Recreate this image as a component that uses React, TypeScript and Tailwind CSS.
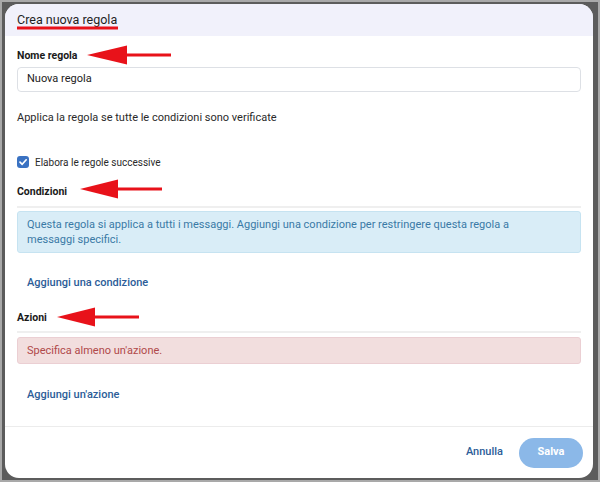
import React from "react";

function Arrow({ tip, y, back, end }: { tip: number; y: number; back: number; end: number }) {
  return (
    <svg className="absolute left-0 top-0 pointer-events-none" width="600" height="482">
      <polygon points={`${tip},${y} ${back},${y - 9.5} ${back},${y + 9.5}`} fill="#e8121a" />
      <rect x={back - 1} y={y - 1.5} width={end - back + 1} height="3" fill="#e8121a" />
    </svg>
  );
}

export default function App() {
  return (
    <div
      className="relative w-[600px] h-[482px] bg-[#a9a9a9] p-[2px]"
      style={{ fontFamily: "Roboto, 'Noto Sans', sans-serif" }}
    >
      <div className="w-full h-full bg-[#5c5c5c] pl-[3px] pt-[2px] pr-[5px] pb-[2px]">
        <div className="w-full h-full bg-white rounded-[14px] overflow-hidden flex flex-col">
          <div className="h-[32px] bg-[#f1f1fb] px-3 flex items-center">
            <span className="text-[12.5px] text-[#1f1f1f] leading-[16px]">Crea nuova regola</span>
          </div>

          <div className="flex-1 px-3">
            <div className="mt-[12px] text-[10.5px] leading-[16px] font-bold text-[#1a1a1a]">Nome regola</div>
            <div className="mt-[3px] h-[25px] border border-[#dde0e5] rounded-[4px] px-[9px] flex items-center text-[11px] text-[#222]">
              Nuova regola
            </div>
            <div className="mt-[18px] text-[11px] leading-[16px] text-[#2a2a2a]">
              Applica la regola se tutte le condizioni sono verificate
            </div>
            <div className="mt-[28px] h-[16px] flex items-center gap-[6px]">
              <span className="w-[12px] h-[12px] rounded-[3px] bg-[#3a72c2] flex items-center justify-center">
                <svg width="10" height="10" viewBox="0 0 10 10">
                  <path d="M2 5.2 L4.2 7.3 L8.2 2.8" fill="none" stroke="white" strokeWidth="1.7" strokeLinecap="round" strokeLinejoin="round" />
                </svg>
              </span>
              <span className="text-[10px] text-[#2a2a2a]">Elabora le regole successive</span>
            </div>
            <div className="mt-[14px] text-[10.5px] leading-[16px] font-bold text-[#1a1a1a]">Condizioni</div>
            <div className="mt-[6px] h-[2px] bg-[#efefef]" />
            <div className="mt-[3px] border border-[#c6e3f1] bg-[#d9edf7] rounded-[3px] pl-[9px] pr-[50px] py-[5px] text-[11px] leading-[15px] text-[#3a7aa6]">
              Questa regola si applica a tutti i messaggi. Aggiungi una condizione per restringere questa regola a messaggi specifici.
            </div>
            <div className="mt-[22px] pl-[10px] text-[11px] leading-[16px] font-medium text-[#2c5d98]">Aggiungi una condizione</div>
            <div className="mt-[19px] text-[10.5px] leading-[16px] font-bold text-[#1a1a1a]">Azioni</div>
            <div className="mt-[5px] h-[2px] bg-[#efefef]" />
            <div className="mt-[4px] border border-[#ebcfd3] bg-[#f2dede] rounded-[3px] px-[9px] py-[5px] text-[11px] leading-[15px] text-[#b0494a]">
              Specifica almeno un'azione.
            </div>
            <div className="mt-[23px] pl-[10px] text-[11px] leading-[16px] font-medium text-[#2c5d98]">Aggiungi un'azione</div>
          </div>

          <div className="h-[52px] border-t border-[#ececec] flex items-center justify-end gap-4 pr-[10px]">
            <span className="text-[11px] font-medium text-[#2c5d98]">Annulla</span>
            <span className="w-[64px] h-[30px] rounded-full bg-[#8bb8e8] flex items-center justify-center text-[11px] font-bold text-white">
              Salva
            </span>
          </div>
        </div>
      </div>

      <svg className="absolute left-0 top-0 pointer-events-none" width="600" height="482">
        <rect x="17" y="26.5" width="101" height="3" fill="#e8121a" />
      </svg>
      <Arrow tip={87} y={55} back={127} end={171} />
      <Arrow tip={80} y={189} back={118} end={162} />
      <Arrow tip={57} y={317} back={95} end={139} />
    </div>
  );
}
